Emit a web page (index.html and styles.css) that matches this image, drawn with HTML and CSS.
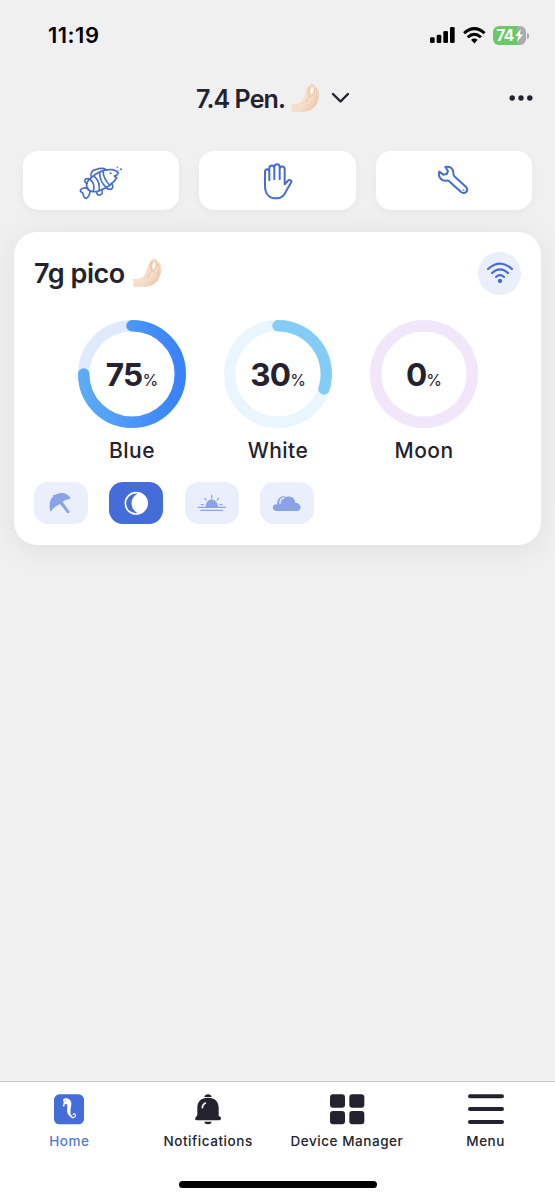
FILE: index.html
```html
<!DOCTYPE html>
<html lang="en">
<head>
<meta charset="utf-8">
<title>Aquarium lights</title>
<link rel="stylesheet" href="styles.css">
</head>
<body>
<svg class="defs" aria-hidden="true">
  <defs>
    <linearGradient id="skin" x1="0" y1="0" x2="1" y2="1"><stop offset="0" stop-color="#f6e2cf"/><stop offset=".6" stop-color="#f5dec8"/><stop offset="1" stop-color="#e4b993"/></linearGradient>
    <linearGradient id="blue" x1="0" y1="0" x2="1" y2="0"><stop offset="0" stop-color="#5cabf5"/><stop offset="1" stop-color="#3a82f8"/></linearGradient>
    <symbol id="pinch" viewBox="0 0 85 90">
      <path fill="url(#skin)" d="M0 63C12 64 22 62 30 56C37 50 38 42 41 33C44 22 48 15 53 8C56 1 62 0 66 3C71 4 74 7 75 11C81 13 84 20 84 30C86 38 84 45 81 52C78 66 70 74 58 81C42 89 25 85 2 88Z"/>
      <ellipse cx="62" cy="23" rx="5" ry="11" transform="rotate(12 62 23)" fill="#fbf7f3"/>
      <path fill="none" stroke="#deb691" stroke-width="1.8" stroke-linecap="round" d="M53 12C49 24 51 34 57 40C50 44 46 50 46 57M57 40C66 40 71 31 71 20C70 11 65 7 61 9C55 14 54 24 57 35M76 18C79 29 78 40 73 49"/>
    </symbol>
  </defs>
</svg>
<div class="phone">
  <header class="status">
    <span class="time">11:19</span>
    <div class="indicators">
      <svg class="signal" viewBox="0 0 75 48"><rect x="0" y="31" width="14" height="17" rx="4"/><rect x="20" y="23" width="14" height="25" rx="4"/><rect x="40" y="12" width="14" height="36" rx="4"/><rect x="60" y="0" width="14" height="48" rx="4"/></svg>
      <svg class="wifi" viewBox="0 0 68 50"><g fill="none" stroke="#000" stroke-width="9"><path d="M3 19Q34-9 65 19"/><path d="M14 31Q34 13 54 31"/></g><path d="M24 39Q34 31 44 39L34 50Z"/></svg>
      <div class="battery"><span>74</span><svg viewBox="0 0 8 13"><path fill="#fff" d="M6 0 0 7H3.5L2 13 8 5.5H4.7Z"/></svg></div>
    </div>
  </header>

  <div class="titlebar">
    <h1 class="title">7.4 Pen.</h1>
    <svg class="pinch"><use href="#pinch"/></svg>
    <svg class="chevron" viewBox="0 0 19 12"><path d="M2 2 9.5 9.5 17 2"/></svg>
    <svg class="more" viewBox="0 0 24 6"><circle cx="3.2" cy="3" r="2.7"/><circle cx="12" cy="3" r="2.7"/><circle cx="20.8" cy="3" r="2.7"/></svg>
  </div>

  <div class="actions">
    <button class="action" aria-label="Feed">
      <svg class="line-icon fish" viewBox="0 0 195 150">
        <path d="M56 102C46 94 48 78 61 67C82 47 105 39 127 41C134 42 140 45 145 51C143 56 139 59 133 60L140 66C130 82 110 96 88 104C76 109 65 108 56 102Z"/>
        <path d="M55 99C47 94 36 95 32 101C28 108 36 108 39 112C40 119 42 127 48 127C56 125 60 113 60 105"/>
        <path d="M64 64C60 52 66 43 76 41C88 37 99 34 108 41M52 82C44 81 42 72 47 69C53 67 57 68 61 70M80 108C80 116 86 119 92 116C98 114 98 108 95 102M108 95C114 102 125 102 128 95C130 88 126 84 124 82"/>
        <path d="M62 72C71 79 73 94 70 106M73 61C84 71 90 88 87 104M89 50C89 66 97 84 109 94M99 45C100 61 108 77 119 87"/>
        <g class="dots"><circle cx="122" cy="52" r="3"/><circle cx="142" cy="34" r="2.5"/><circle cx="153" cy="40" r="3"/><circle cx="144" cy="44" r="2"/></g>
      </svg>
    </button>
    <button class="action" aria-label="Manual mode">
      <svg class="line-icon hand" viewBox="0 0 180 150">
        <path d="M45 89V47C45 37 58 37 58 47V73M58 70V37C58 26 73 26 73 37V70M73 70V32C73 22 89 22 89 32V70M89 70V39C89 29 104 29 104 39V85L113 75C120 69 127 74 123 80L108 106C102 121 92 127 79 127C56 127 45 111 45 89"/>
      </svg>
    </button>
    <button class="action" aria-label="Maintenance">
      <svg class="line-icon wrench" viewBox="0 0 180 150">
        <path d="M61 33L69 45L65 54L55 56L43 47C38 61 48 75 64 74C68 73 71 74 74 77L108 108C120 116 132 105 124 94L88 61C85 58 85 55 85 51C85 37 74 29 61 33Z"/><circle class="hole" cx="116" cy="102" r="2.5"/>
      </svg>
    </button>
  </div>

  <main class="card">
    <div class="card-head">
      <h2 class="device">7g pico</h2>
      <svg class="pinch"><use href="#pinch"/></svg>
      <div class="link">
        <svg viewBox="0 0 78 64"><g fill="none" stroke="#456dd6" stroke-width="6.5" stroke-linecap="round"><path d="M3 21Q39-11 75 21"/><path d="M15 33Q39 11 63 33"/><path d="M27 45Q39 34 51 45"/></g><circle cx="39" cy="57" r="6.5" fill="#456dd6"/></svg>
      </div>
    </div>
    <div class="channels">
      <div class="channel">
        <div class="ring"><svg viewBox="0 0 108 108"><circle cx="54" cy="54" r="48.3" stroke="#dfeafc"/><path stroke="url(#blue)" d="M54 5.7A48.3 48.3 0 1 1 5.7 54"/></svg><p class="value">75<small>%</small></p></div>
        <p class="name">Blue</p>
      </div>
      <div class="channel">
        <div class="ring"><svg viewBox="0 0 108 108"><circle cx="54" cy="54" r="48.3" stroke="#e9f6fe"/><path stroke="#83ccf5" d="M54 5.7A48.3 48.3 0 0 1 99.94 68.93"/></svg><p class="value">30<small>%</small></p></div>
        <p class="name">White</p>
      </div>
      <div class="channel">
        <div class="ring"><svg viewBox="0 0 108 108"><circle cx="54" cy="54" r="48.3" stroke="#f2e6fb"/></svg><p class="value">0<small>%</small></p></div>
        <p class="name">Moon</p>
      </div>
    </div>
    <div class="modes">
      <button class="mode" aria-label="Acclimation"><svg viewBox="0 0 162 126"><path d="M50 90C44 74 46 53 58 43L57 38L63 39C78 28 102 32 110 50C99 51 92 54 86 60L106 88C108 93 103 96 99 92L78 66C66 71 56 79 50 90Z"/></svg></button>
      <button class="mode active" aria-label="Moonlight"><svg viewBox="0 0 162 126"><circle cx="81" cy="64" r="32" fill="none" stroke="#fff" stroke-width="5"/><path d="M84 36C62 48 62 80 84 92L84 97A33 33 0 0 0 84 31Z"/></svg></button>
      <button class="mode" aria-label="Sunrise"><svg viewBox="0 0 162 126"><path d="M62 75C61 45 98 45 99 75Z"/><path class="rays" d="M39 76H121M47 85H113M80 40V48M60 49L63 54M100 49L97 54M49 68H55M105 68H111"/></svg></button>
      <button class="mode" aria-label="Clouds"><svg viewBox="0 0 162 126"><path d="M49 87C33 85 36 65 51 67C52 47 66 39 79 45C91 41 105 47 106 62C126 64 126 85 112 87Z"/><path class="shine" d="M60 65C59 55 64 49 72 48"/></svg></button>
    </div>
  </main>

  <nav class="tabs">
    <a class="tab selected"><svg class="tab-icon" viewBox="0 0 108 93"><rect x="9" y="1" width="90" height="90" rx="16" fill="#456dd9"/><path fill="#fff" d="M36 16C42 11 52 12 57 18C64 25 60 36 59 44C58 52 57 60 64 68C56 68 48 60 48 50C48 42 51 35 46 29L42 30L39 39L35 36L38 26Z"/><path d="M54 58C58 69 66 74 72 68C76 62 70 56 66 61" fill="none" stroke="#fff" stroke-width="3.5" stroke-linecap="round"/><circle cx="43" cy="21" r="1.5" fill="#456dd9"/></svg><span>Home</span></a>
    <a class="tab"><svg class="tab-icon" viewBox="0 0 108 93"><path d="M43 9Q45 1 54 1Q63 1 65 9ZM54 11C75 11 86 23 86 42V65L92 70C95 77 91 79 86 79H22C15 79 14 75 17 70L22 64V42C22 23 33 11 54 11ZM42 83H66Q62 91 54 91Q46 91 42 83Z"/><path d="M37 41Q38 31 46 27" fill="none" stroke="#fff" stroke-width="5" stroke-linecap="round"/></svg><span>Notifications</span></a>
    <a class="tab"><svg class="tab-icon" viewBox="0 0 108 93"><rect x="3" y="1" width="45" height="40" rx="9"/><rect x="61" y="1" width="45" height="40" rx="9"/><rect x="3" y="51" width="45" height="40" rx="9"/><rect x="61" y="51" width="45" height="40" rx="9"/></svg><span>Device Manager</span></a>
    <a class="tab"><svg class="tab-icon" viewBox="0 0 108 93"><path d="M6 7H102M6 45H102M6 84H102" stroke="#23222e" stroke-width="12" stroke-linecap="round"/></svg><span>Menu</span></a>
    <div class="home-bar"></div>
  </nav>
</div>
</body>
</html>
```

FILE: styles.css
```css
* { box-sizing: border-box; margin: 0; padding: 0; }
body { background: #f0f0f0; color: #23222e; font-family: Inter, "Liberation Sans", sans-serif; }
button { border: 0; font: inherit; }
svg { display: block; overflow: visible; flex: none; }
.defs { position: absolute; width: 0; height: 0; }
.phone { display: flex; flex-direction: column; width: 555px; height: 1200px; overflow: hidden; }

.status { display: flex; justify-content: space-between; align-items: center; height: 70px; padding: 0 29px 0 48px; }
.time { color: #000; font-size: 22px; font-weight: 600; letter-spacing: .5px; }
.indicators { display: flex; align-items: center; gap: 7.5px; }
.signal { width: 25px; height: 16px; }
.wifi { width: 22.7px; height: 16.5px; }
.battery { position: relative; display: flex; align-items: center; justify-content: center; gap: 1px; width: 33px; height: 19px; border-radius: 6px; background: linear-gradient(90deg, #68c969 74%, #acacac 74%); color: #fff; font-size: 15.5px; font-weight: 700; letter-spacing: -.5px; }
.battery::after { content: ""; position: absolute; left: 34px; top: 7px; width: 2px; height: 6px; border-radius: 0 2px 2px 0; background: #aaa; }
.battery svg { width: 8px; height: 13px; }

.titlebar { display: flex; align-items: center; height: 56px; padding: 0 22px 0 196px; }
.title { width: 95px; padding-top: 1px; font-size: 25px; font-weight: 600; letter-spacing: -.9px; white-space: nowrap; }
.pinch { width: 28.5px; height: 30px; }
.chevron { width: 19px; height: 12px; margin-left: 11px; fill: none; stroke: #23222e; stroke-width: 2.4; stroke-linecap: round; stroke-linejoin: round; }
.more { width: 24px; height: 6px; margin-left: auto; fill: #23222e; }

.actions { display: grid; grid-template-columns: repeat(3, 1fr); gap: 20px; padding: 25px 23px 22px; }
.action { display: flex; align-items: center; justify-content: center; height: 59px; border-radius: 15px; background: #fff; box-shadow: 0 3px 10px rgba(0, 0, 0, .04); }
.line-icon { width: 60px; height: 50px; fill: none; stroke: #456dd0; stroke-width: 6; stroke-linecap: round; stroke-linejoin: round; }
.fish { width: 65px; margin-left: 3px; stroke-width: 5; }
.hand { margin-left: 5px; }
.wrench { margin-left: 2px; }
.dots, .hole { fill: #456dd0; stroke: none; }

.card { height: 313px; margin: 0 14px; padding: 20px 20px 0; border-radius: 23px; background: #fff; box-shadow: 0 5px 30px rgba(0, 0, 0, .07); }
.card-head { display: flex; align-items: center; height: 42px; }
.device { width: 99px; font-size: 27px; font-weight: 600; letter-spacing: -.45px; white-space: nowrap; }
.link { display: flex; align-items: center; justify-content: center; width: 43px; height: 43px; margin-left: auto; border-radius: 50%; background: #eaeffb; }
.link svg { width: 26px; height: 21.3px; }
.channels { display: flex; justify-content: space-between; padding: 26px 43px 0 44px; }
.channel { width: 108px; text-align: center; }
.ring { display: grid; place-items: center; width: 108px; height: 108px; }
.ring svg, .value { grid-area: 1 / 1; }
.ring svg { width: 108px; height: 108px; fill: none; stroke-width: 11.4; stroke-linecap: round; }
.value { padding-top: 1px; font-size: 31.5px; font-weight: 700; letter-spacing: -.8px; white-space: nowrap; }
.value small { font-size: 16px; font-weight: 400; letter-spacing: 0; }
.name { margin-top: 9px; font-size: 21px; font-weight: 450; line-height: 28px; letter-spacing: .45px; }
.modes { display: flex; gap: 21.3px; margin-top: 17px; }
.mode { width: 54px; height: 42px; border-radius: 14px; background: #eaeffb; fill: #89a4e6; }
.mode svg { width: 54px; height: 42px; }
.mode.active { background: #456dd9; fill: #fff; }
.rays { stroke: #89a4e6; stroke-width: 4; stroke-linecap: round; }
.shine { fill: none; stroke: #eaeffb; stroke-width: 4; stroke-linecap: round; }

.tabs { position: relative; display: grid; grid-template-columns: repeat(4, 1fr); height: 119px; margin-top: auto; padding-top: 12px; border-top: 1px solid #c9c9c9; background: #fff; fill: #23222e; }
.tab { display: flex; flex-direction: column; align-items: center; gap: 6px; font-size: 13.5px; font-weight: 500; line-height: 20px; letter-spacing: .55px; white-space: nowrap; }
.tab-icon { width: 36px; height: 31px; }
.selected { color: #5279da; }
.home-bar { position: absolute; left: 179px; bottom: 12px; width: 198px; height: 7px; border-radius: 4px; background: #000; }
```
